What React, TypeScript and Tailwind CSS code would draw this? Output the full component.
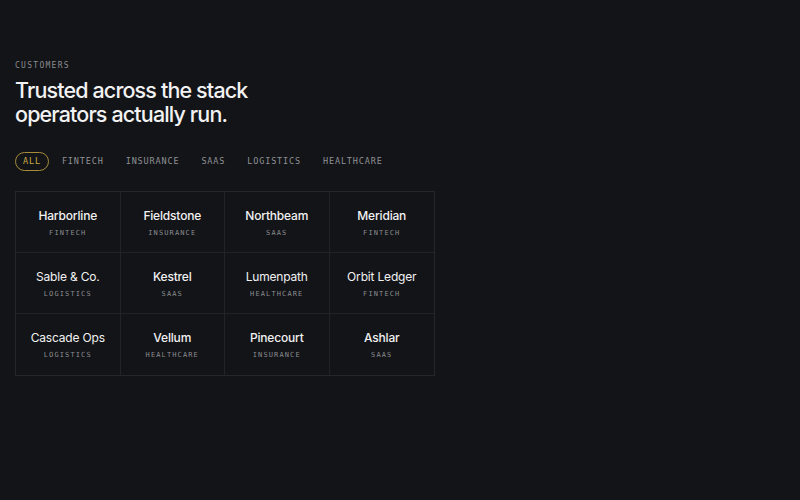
import React from 'react';

const filters = ['All', 'Fintech', 'Insurance', 'SaaS', 'Logistics', 'Healthcare'];

const customers = [
  { name: 'Harborline', tag: 'Fintech', weight: 'font-medium' },
  { name: 'Fieldstone', tag: 'Insurance', weight: 'font-medium' },
  { name: 'Northbeam', tag: 'SaaS', weight: 'font-medium' },
  { name: 'Meridian', tag: 'Fintech', weight: 'font-medium' },
  { name: 'Sable & Co.', tag: 'Logistics', weight: 'font-normal' },
  { name: 'Kestrel', tag: 'SaaS', weight: 'font-medium' },
  { name: 'Lumenpath', tag: 'Healthcare', weight: 'font-normal' },
  { name: 'Orbit Ledger', tag: 'Fintech', weight: 'font-normal' },
  { name: 'Cascade Ops', tag: 'Logistics', weight: 'font-normal' },
  { name: 'Vellum', tag: 'Healthcare', weight: 'font-medium' },
  { name: 'Pinecourt', tag: 'Insurance', weight: 'font-medium' },
  { name: 'Ashlar', tag: 'SaaS', weight: 'font-medium' },
];

const mono = { fontFamily: '"DejaVu Sans Mono", "Liberation Mono", monospace' };

const App = () => {
  return (
    <div
      className="min-h-[500px] w-full bg-[#131417] px-[15px] pt-[61px] text-white"
      style={{ fontFamily: 'Inter, "Noto Sans", sans-serif' }}
    >
      <p className="text-[8px] leading-[10px] tracking-[0.16em] text-[#8a8c91] uppercase" style={mono}>
        Customers
      </p>
      <h2 className="mt-[7px] text-[21.5px] leading-[24px] font-medium tracking-[-0.04em] text-[#f2f2f3]">
        Trusted across the stack
        <br />
        operators actually run.
      </h2>

      <div className="mt-[26px] flex items-center gap-1">
        {filters.map((f, i) => (
          <span
            key={f}
            className={
              i === 0
                ? 'h-[19px] rounded-full border border-[#a58b3a] px-[7px] text-[8.5px] leading-[17px] tracking-[0.1em] text-[#c9a94a] uppercase'
                : 'h-[19px] rounded-full border border-transparent px-[8px] text-[8.5px] leading-[17px] tracking-[0.1em] text-[#8f9196] uppercase'
            }
            style={mono}
          >
            {f}
          </span>
        ))}
      </div>

      <div className="mt-[20px] grid w-[420px] grid-cols-4 border border-[#25262a]">
        {customers.map((c, i) => (
          <div
            key={c.name}
            className={
              'flex h-[61px] flex-col items-center justify-center border-[#222327] pt-[1px] ' +
              (i % 4 !== 3 ? 'border-r ' : '') +
              (i < 8 ? 'border-b' : '')
            }
          >
            <span className={'text-[12px] leading-[15px] tracking-[-0.015em] text-[#f1f1f2] ' + c.weight}>
              {c.name}
            </span>
            <span
              className="mt-[6px] text-[7px] leading-[9px] tracking-[0.16em] text-[#8a8c91] uppercase"
              style={mono}
            >
              {c.tag}
            </span>
          </div>
        ))}
      </div>
    </div>
  );
};

export default App;
